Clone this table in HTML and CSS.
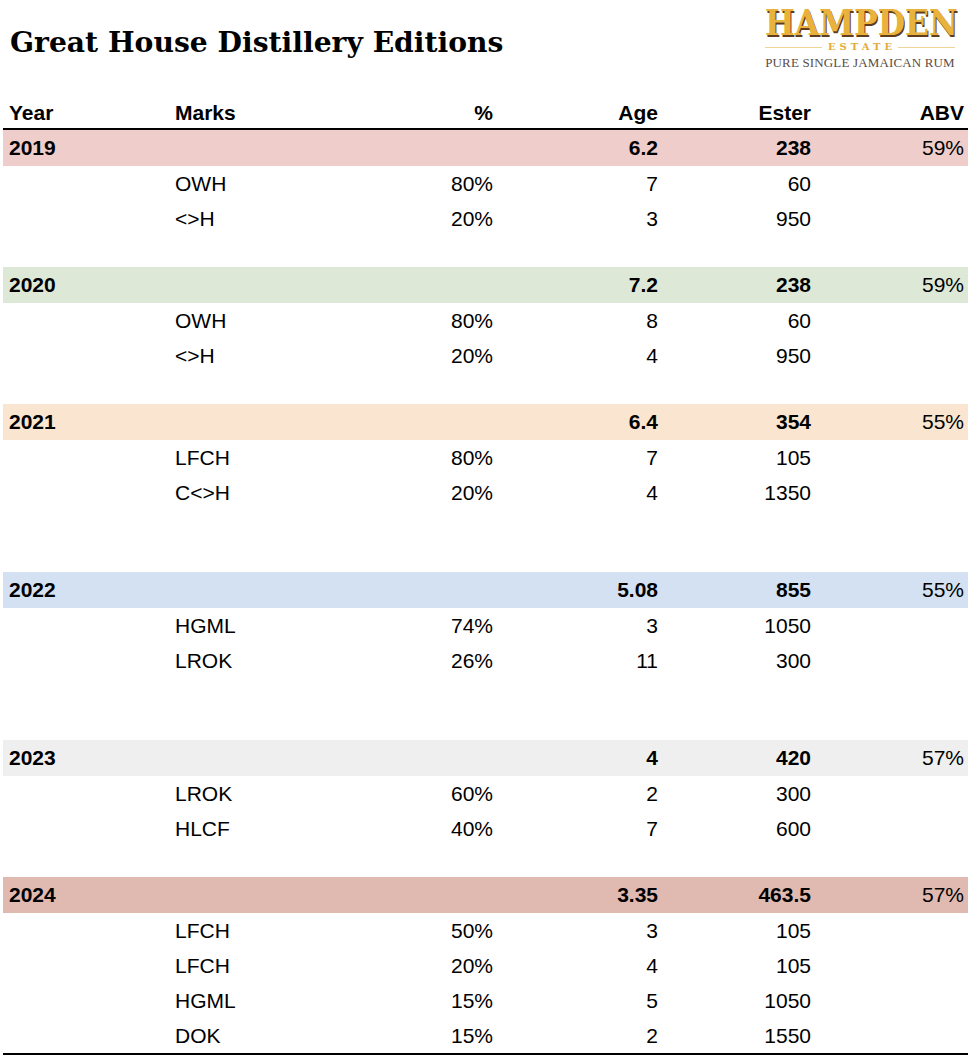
FILE: index.html
```html
<!DOCTYPE html>
<html lang="en">
<head>
<meta charset="utf-8">
<title>Great House Distillery Editions</title>
<link rel="stylesheet" href="styles.css">
</head>
<body>
<div class="top">
  <h1 class="title">Great House Distillery Editions</h1>
  <div class="logo">
    <div class="logo-name">HAMPDEN</div>
    <div class="logo-estate"><span class="logo-line"></span><span class="logo-estate-text">ESTATE</span><span class="logo-line"></span></div>
    <div class="logo-tag">PURE SINGLE JAMAICAN RUM</div>
  </div>
</div>
<div class="table">
  <div class="row head"><div class="c l">Year</div><div class="c l">Marks</div><div class="c r">%</div><div class="c r">Age</div><div class="c r">Ester</div><div class="c r">ABV</div></div>

  <div class="row band y2019"><div class="c l b">2019</div><div class="c"></div><div class="c"></div><div class="c r b">6.2</div><div class="c r b">238</div><div class="c r">59%</div></div>
  <div class="row data"><div class="c"></div><div class="c l">OWH</div><div class="c r">80%</div><div class="c r">7</div><div class="c r">60</div><div class="c"></div></div>
  <div class="row data"><div class="c"></div><div class="c l">&lt;&gt;H</div><div class="c r">20%</div><div class="c r">3</div><div class="c r">950</div><div class="c"></div></div>
  <div class="row blank"></div>

  <div class="row band y2020"><div class="c l b">2020</div><div class="c"></div><div class="c"></div><div class="c r b">7.2</div><div class="c r b">238</div><div class="c r">59%</div></div>
  <div class="row data"><div class="c"></div><div class="c l">OWH</div><div class="c r">80%</div><div class="c r">8</div><div class="c r">60</div><div class="c"></div></div>
  <div class="row data"><div class="c"></div><div class="c l">&lt;&gt;H</div><div class="c r">20%</div><div class="c r">4</div><div class="c r">950</div><div class="c"></div></div>
  <div class="row blank"></div>

  <div class="row band y2021"><div class="c l b">2021</div><div class="c"></div><div class="c"></div><div class="c r b">6.4</div><div class="c r b">354</div><div class="c r">55%</div></div>
  <div class="row data"><div class="c"></div><div class="c l">LFCH</div><div class="c r">80%</div><div class="c r">7</div><div class="c r">105</div><div class="c"></div></div>
  <div class="row data"><div class="c"></div><div class="c l">C&lt;&gt;H</div><div class="c r">20%</div><div class="c r">4</div><div class="c r">1350</div><div class="c"></div></div>
  <div class="row blank"></div>
  <div class="row blank"></div>

  <div class="row band y2022"><div class="c l b">2022</div><div class="c"></div><div class="c"></div><div class="c r b">5.08</div><div class="c r b">855</div><div class="c r">55%</div></div>
  <div class="row data"><div class="c"></div><div class="c l">HGML</div><div class="c r">74%</div><div class="c r">3</div><div class="c r">1050</div><div class="c"></div></div>
  <div class="row data"><div class="c"></div><div class="c l">LROK</div><div class="c r">26%</div><div class="c r">11</div><div class="c r">300</div><div class="c"></div></div>
  <div class="row blank"></div>
  <div class="row blank"></div>

  <div class="row band y2023"><div class="c l b">2023</div><div class="c"></div><div class="c"></div><div class="c r b">4</div><div class="c r b">420</div><div class="c r">57%</div></div>
  <div class="row data"><div class="c"></div><div class="c l">LROK</div><div class="c r">60%</div><div class="c r">2</div><div class="c r">300</div><div class="c"></div></div>
  <div class="row data"><div class="c"></div><div class="c l">HLCF</div><div class="c r">40%</div><div class="c r">7</div><div class="c r">600</div><div class="c"></div></div>
  <div class="row blank"></div>

  <div class="row band y2024"><div class="c l b">2024</div><div class="c"></div><div class="c"></div><div class="c r b">3.35</div><div class="c r b">463.5</div><div class="c r">57%</div></div>
  <div class="row data"><div class="c"></div><div class="c l">LFCH</div><div class="c r">50%</div><div class="c r">3</div><div class="c r">105</div><div class="c"></div></div>
  <div class="row data"><div class="c"></div><div class="c l">LFCH</div><div class="c r">20%</div><div class="c r">4</div><div class="c r">105</div><div class="c"></div></div>
  <div class="row data"><div class="c"></div><div class="c l">HGML</div><div class="c r">15%</div><div class="c r">5</div><div class="c r">1050</div><div class="c"></div></div>
  <div class="row data last"><div class="c"></div><div class="c l">DOK</div><div class="c r">15%</div><div class="c r">2</div><div class="c r">1550</div><div class="c"></div></div>
</div>
</body>
</html>
```
FILE: styles.css
```css
html, body {
  margin: 0;
  padding: 0;
  background: #ffffff;
}
body {
  font-family: "Liberation Sans", Arial, sans-serif;
  color: #000000;
}
.top {
  display: flex;
  justify-content: space-between;
  align-items: flex-start;
  height: 94px;
}
.title {
  margin: 0;
  padding: 26px 0 0 10px;
  font-family: "DejaVu Serif", serif;
  font-weight: bold;
  font-size: 28.2px;
  line-height: 34px;
  color: #000000;
}
.logo {
  width: 190px;
  margin: 5px 15px 0 0;
  display: flex;
  flex-direction: column;
}
.logo-name {
  font-family: "DejaVu Serif Condensed", "DejaVu Serif", serif;
  font-stretch: condensed;
  font-weight: bold;
  font-size: 35px;
  line-height: 35px;
  color: #e9b23c;
  text-shadow: 1px 2px 0 #5e3d20;
  text-align: center;
  white-space: nowrap;
}
.logo-estate {
  display: flex;
  align-items: center;
  gap: 6px;
  height: 12px;
  margin-top: 1px;
}
.logo-line {
  flex: 1;
  height: 1px;
  background: #efd49a;
}
.logo-estate-text {
  font-family: "DejaVu Serif", serif;
  font-weight: bold;
  font-size: 10px;
  letter-spacing: 4px;
  color: #e4ab3a;
  line-height: 12px;
  margin-right: -4px;
}
.logo-tag {
  font-family: "Liberation Serif", serif;
  font-size: 13px;
  letter-spacing: 0.15px;
  line-height: 16px;
  color: #5a4c44;
  text-align: center;
  white-space: nowrap;
  margin-top: 2px;
}
.table {
  margin-left: 3px;
  width: 965px;
  font-size: 21px;
}
.row {
  display: grid;
  grid-template-columns: 166px 164px 164px 165px 153px 153px;
  align-items: center;
}
.head {
  height: 34px;
  align-items: end;
  border-bottom: 2px solid #000000;
  font-weight: bold;
}
.head .c {
  padding-bottom: 3px;
}
.c {
  line-height: 24px;
  white-space: nowrap;
}
.l {
  padding-left: 6px;
  text-align: left;
}
.r {
  padding-right: 4px;
  text-align: right;
}
.b {
  font-weight: bold;
}
.band {
  height: 36px;
}
.data {
  height: 35px;
}
.blank {
  height: 31px;
}
.last {
  border-bottom: 2px solid #000000;
}
.y2019 { background: #efcdcb; }
.y2020 { background: #dde9d6; }
.y2021 { background: #f9e5d0; }
.y2022 { background: #d4e1f2; }
.y2023 { background: #efefef; }
.y2024 { background: #e0b9b0; }
```
